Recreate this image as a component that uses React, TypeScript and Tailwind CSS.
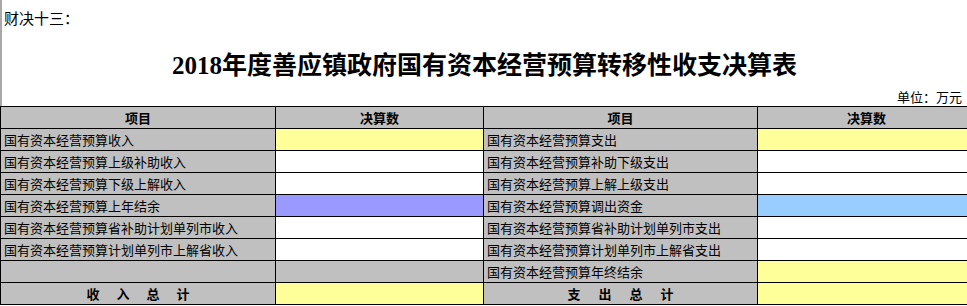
const rows = [
  { left: "国有资本经营预算收入", leftVal: "bg-[#ffff99]", right: "国有资本经营预算支出", rightVal: "bg-[#ffff99]" },
  { left: "国有资本经营预算上级补助收入", leftVal: "bg-white", right: "国有资本经营预算补助下级支出", rightVal: "bg-white" },
  { left: "国有资本经营预算下级上解收入", leftVal: "bg-white", right: "国有资本经营预算上解上级支出", rightVal: "bg-white" },
  { left: "国有资本经营预算上年结余", leftVal: "bg-[#9999ff]", right: "国有资本经营预算调出资金", rightVal: "bg-[#99ccff]" },
  { left: "国有资本经营预算省补助计划单列市收入", leftVal: "bg-white", right: "国有资本经营预算省补助计划单列市支出", rightVal: "bg-white" },
  { left: "国有资本经营预算计划单列市上解省收入", leftVal: "bg-white", right: "国有资本经营预算计划单列市上解省支出", rightVal: "bg-white" },
  { left: "", leftVal: "bg-[#c0c0c0]", right: "国有资本经营预算年终结余", rightVal: "bg-[#ffff99]" },
]

const cell = "border border-black h-[22px] p-0 leading-[21px] text-[13px]"

export default function App() {
  return (
    <div
      className="w-[967px] h-[306px] overflow-hidden bg-white text-black"
      style={{ fontFamily: '"Noto Sans CJK SC", "Liberation Sans", sans-serif' }}
    >
      <div className="h-[106px] border-l-2 border-[#a8a8a8] flex flex-col">
        <div className="pl-[2px] pt-[9px] text-[15px] leading-[18px]">财决十三：</div>
        <div className="flex justify-center pt-[24px]">
          <h1
            className="text-[25px] leading-[30px] font-bold"
            style={{ fontFamily: '"Liberation Serif", "Noto Sans CJK SC", serif' }}
          >
            2018年度善应镇政府国有资本经营预算转移性收支决算表
          </h1>
        </div>
        <div className="mt-auto pr-[5px] pb-[1px] text-right text-[13px] leading-[16px]">单位：万元</div>
      </div>
      <table className="border-collapse table-fixed w-[975px]">
        <colgroup>
          <col className="w-[275px]" />
          <col className="w-[208px]" />
          <col className="w-[274px]" />
          <col className="w-[218px]" />
        </colgroup>
        <thead>
          <tr className="bg-[#c0c0c0] font-bold">
            <th className={cell}>项目</th>
            <th className={cell}>决算数</th>
            <th className={cell}>项目</th>
            <th className={cell}>决算数</th>
          </tr>
        </thead>
        <tbody>
          {rows.map((r, i) => (
            <tr key={i}>
              <td className={`${cell} bg-[#c0c0c0] pl-[3px] whitespace-nowrap`}>{r.left}</td>
              <td className={`${cell} ${r.leftVal}`}></td>
              <td className={`${cell} bg-[#c0c0c0] pl-[3px] whitespace-nowrap`}>{r.right}</td>
              <td className={`${cell} ${r.rightVal}`}></td>
            </tr>
          ))}
          <tr className="font-bold">
            <td className={`${cell} bg-[#c0c0c0] text-center tracking-[17px] pl-[17px]`}>收入总计</td>
            <td className={`${cell} bg-[#ffff99]`}></td>
            <td className={`${cell} bg-[#c0c0c0] text-center tracking-[18px] pl-[18px]`}>支出总计</td>
            <td className={`${cell} bg-[#ffff99]`}></td>
          </tr>
        </tbody>
      </table>
    </div>
  )
}
